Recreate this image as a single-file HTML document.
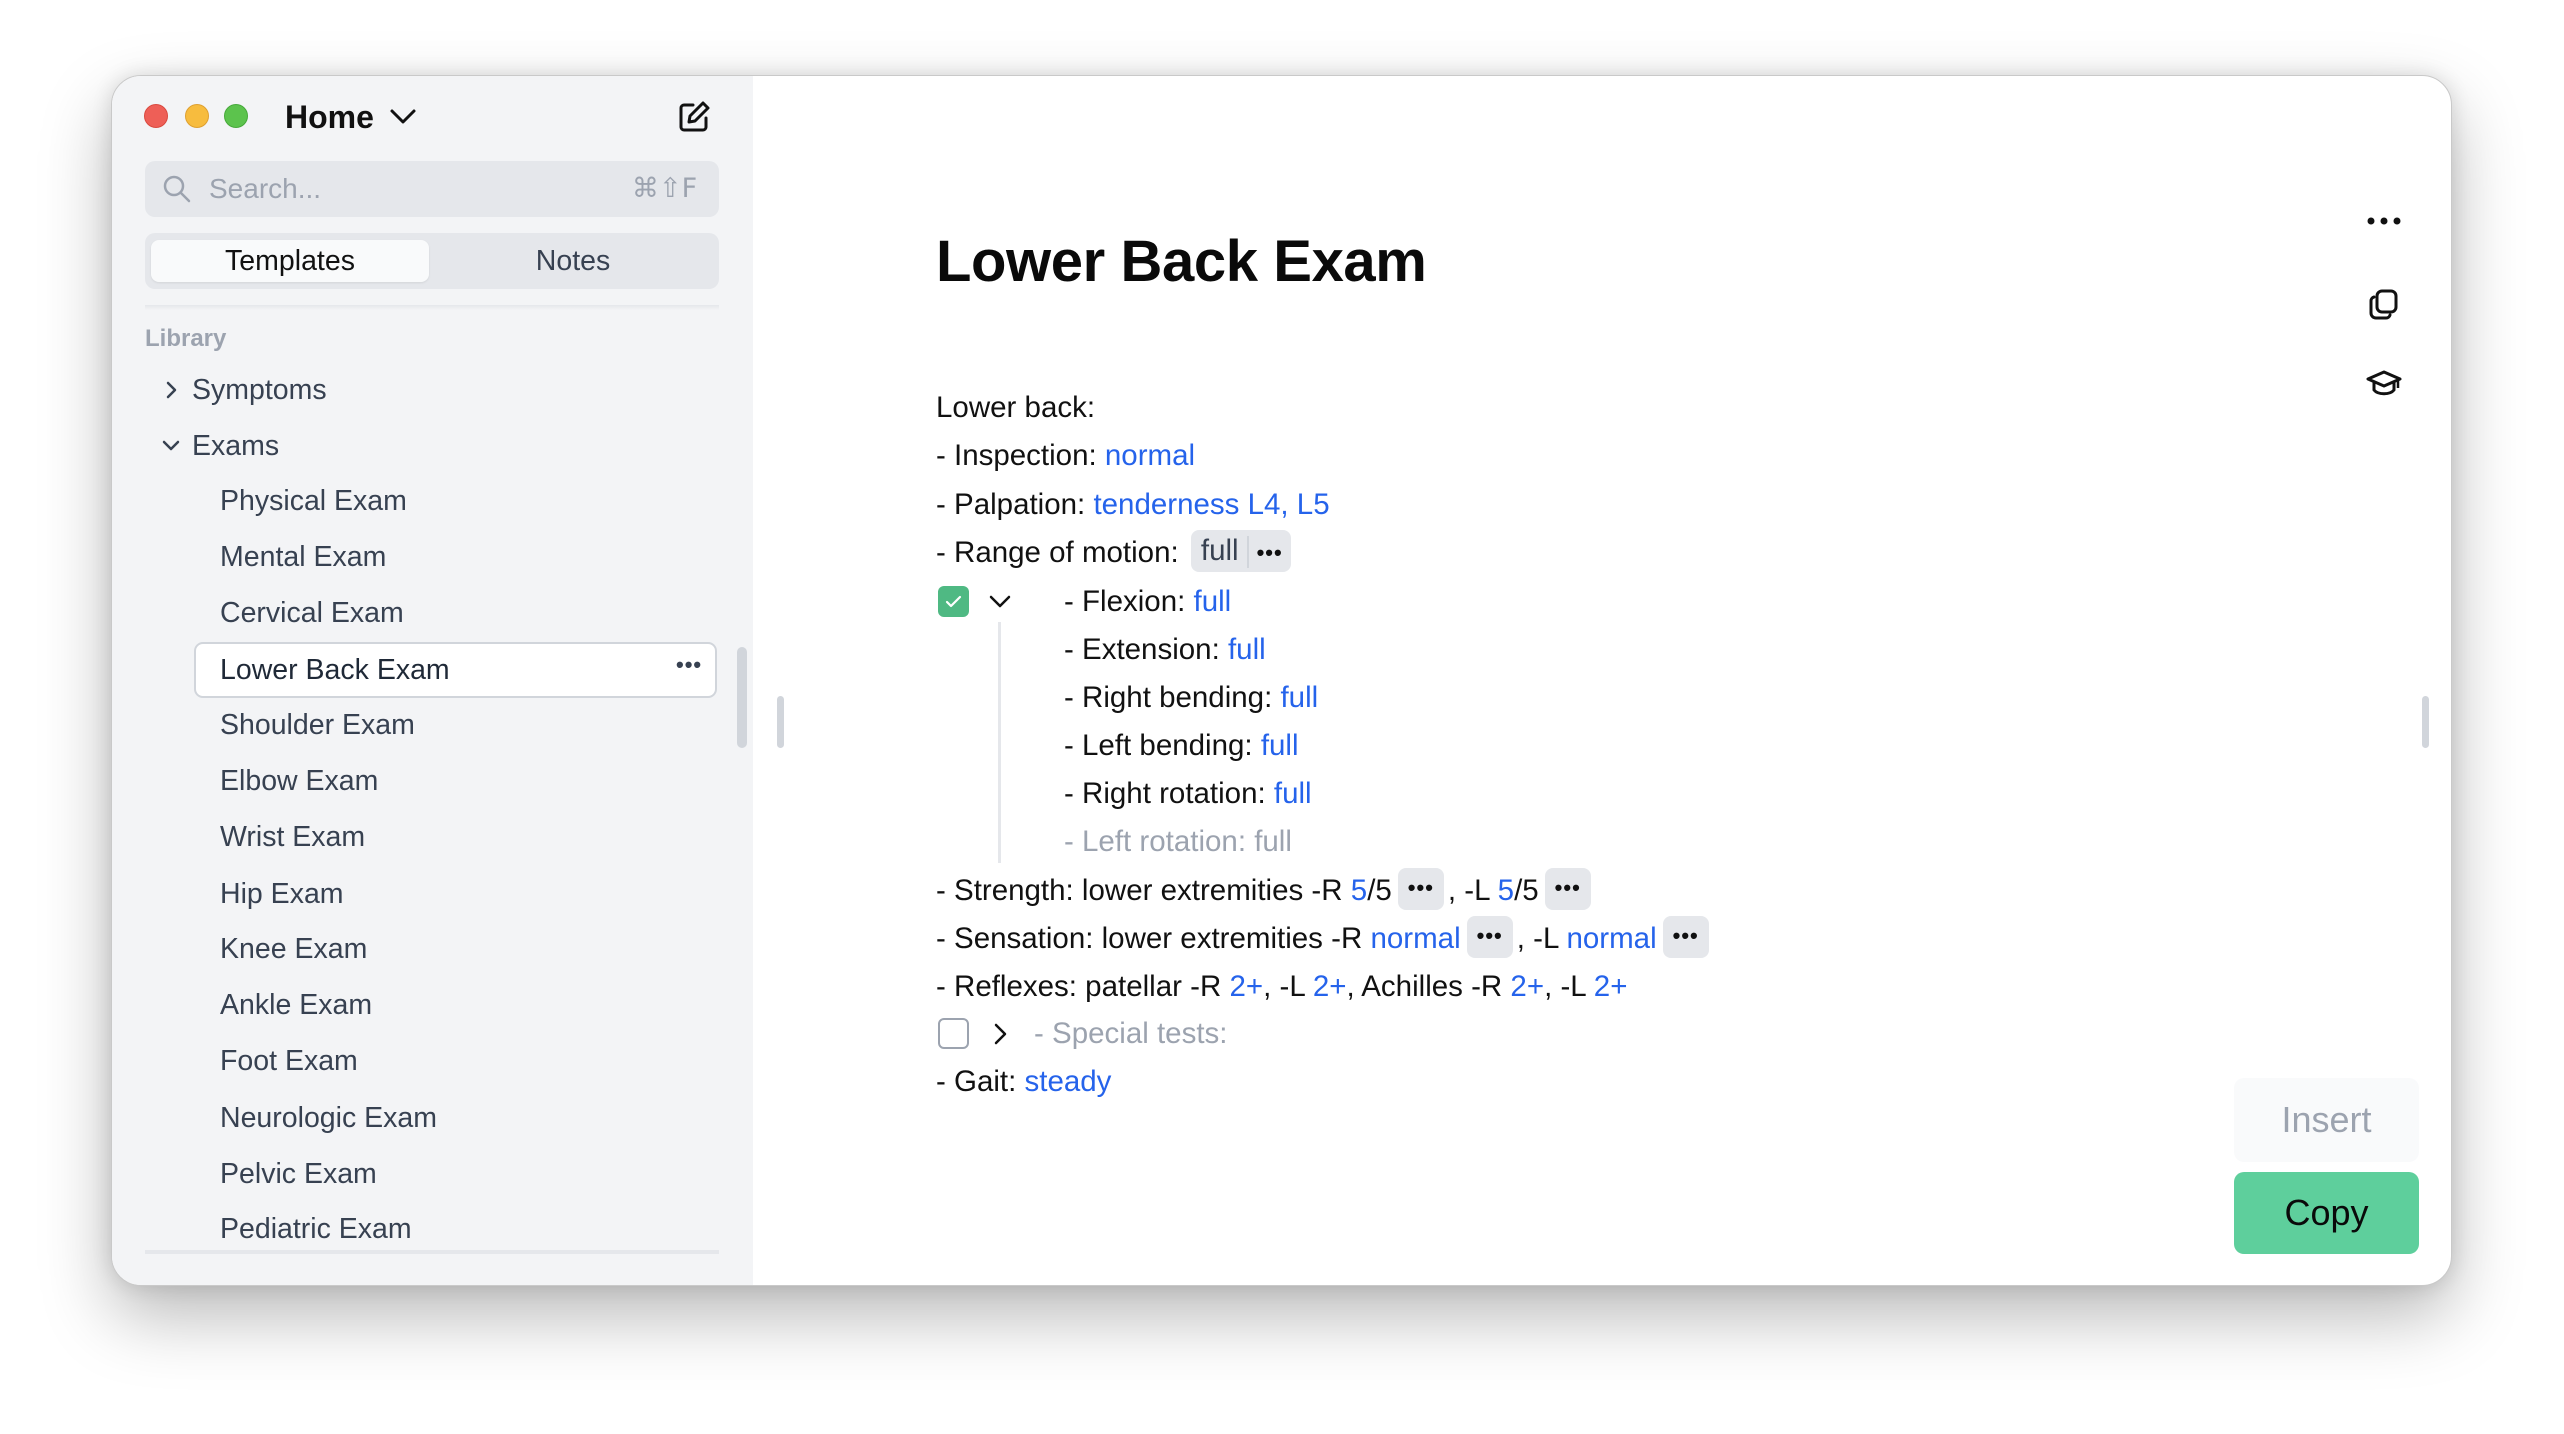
<!DOCTYPE html>
<html><head><meta charset="utf-8"><style>
*{margin:0;padding:0;box-sizing:border-box}
body{width:2564px;height:1434px;background:#fff;font-family:"Liberation Sans",sans-serif;position:relative;overflow:hidden}
.win{position:absolute;left:111px;top:75px;width:2341px;height:1211px;border-radius:30px;background:#fff;border:1px solid #c9c9c9;box-shadow:0 30px 70px rgba(0,0,0,.28),0 0 20px rgba(0,0,0,.12);overflow:hidden}
.side{position:absolute;left:0;top:0;width:641px;height:100%;background:#f3f4f6}
.a{position:absolute}
.dot{position:absolute;width:24px;height:24px;border-radius:50%;top:28px}
.si{position:absolute;left:108px;font-size:28.5px;color:#374151;line-height:40px}
.t{position:absolute;left:824px;font-size:29.5px;line-height:40px;color:#111;white-space:nowrap}
.b{color:#2563eb}
.pill{display:inline-block;background:#e5e7eb;border-radius:8px;height:42px;vertical-align:middle;line-height:40px;padding:0 10px;font-weight:bold;letter-spacing:1px;font-size:22px;color:#111;margin:-6px 4px 0 6px}
</style></head><body>
<div class="win">
 <div class="side">
  <div class="dot" style="left:32px;background:#ee5f57;border:1px solid #d9493f"></div>
  <div class="dot" style="left:73px;background:#f7bc3e;border:1px solid #dea030"></div>
  <div class="dot" style="left:112px;background:#5cc34d;border:1px solid #46a93a"></div>
  <div class="a" style="left:173px;top:20px;font-size:32px;font-weight:bold;color:#111;line-height:42px">Home</div>
  <svg class="a" style="left:277px;top:32px" width="28" height="18" viewBox="0 0 28 18"><path d="M3 3l11 11 11-11" fill="none" stroke="#111" stroke-width="3" stroke-linecap="round" stroke-linejoin="round"/></svg>
  <svg class="a" style="left:565px;top:24px" width="34" height="34" viewBox="0 0 34 34"><path d="M16 5H7a3 3 0 0 0-3 3v19a3 3 0 0 0 3 3h19a3 3 0 0 0 3-3v-9" fill="none" stroke="#111" stroke-width="3" stroke-linecap="round"/><path d="M26 3l5 5-13 13-6 1 1-6z" fill="none" stroke="#111" stroke-width="3" stroke-linejoin="round"/></svg>
  <div class="a" style="left:33px;top:85px;width:574px;height:56px;background:#e5e7eb;border-radius:10px"></div>
  <svg class="a" style="left:50px;top:98px" width="30" height="30" viewBox="0 0 30 30"><circle cx="12" cy="12" r="9" fill="none" stroke="#9ca3af" stroke-width="2.5"/><path d="M19 19l8 8" stroke="#9ca3af" stroke-width="2.5" stroke-linecap="round"/></svg>
  <div class="a" style="left:97px;top:93px;font-size:28px;color:#9ca3af;line-height:40px">Search...</div>
  <div class="a" style="left:520px;top:93px;font-size:27px;color:#9ca3af;line-height:40px;font-family:'DejaVu Sans',sans-serif">⌘⇧F</div>
  <div class="a" style="left:33px;top:157px;width:574px;height:56px;background:#e5e7eb;border-radius:10px"></div>
  <div class="a" style="left:39px;top:164px;width:278px;height:42px;background:#f9fafb;border-radius:8px;box-shadow:0 1px 2px rgba(0,0,0,.08)"></div>
  <div class="a" style="left:39px;top:165px;width:278px;text-align:center;font-size:28.5px;line-height:40px;color:#111">Templates</div>
  <div class="a" style="left:320px;top:165px;width:282px;text-align:center;font-size:28.5px;line-height:40px;color:#374151">Notes</div>
  <div class="a" style="left:33px;top:229px;width:574px;height:5px;background:linear-gradient(#e5e7eb,#f3f4f6)"></div>
  <div class="a" style="left:33px;top:248px;font-size:24px;font-weight:bold;color:#9ca3af;line-height:30px">Library</div>
  <svg class="a" style="left:52px;top:304px" width="14" height="20" viewBox="0 0 14 20"><path d="M4 3l7 7-7 7" fill="none" stroke="#374151" stroke-width="2.5" stroke-linecap="round" stroke-linejoin="round"/></svg>
  <div class="si" style="left:80px;top:294px">Symptoms</div>
  <svg class="a" style="left:49px;top:363px" width="20" height="14" viewBox="0 0 20 14"><path d="M3 3l7 7 7-7" fill="none" stroke="#374151" stroke-width="2.5" stroke-linecap="round" stroke-linejoin="round"/></svg>
  <div class="si" style="left:80px;top:350px">Exams</div>
  <div class="a" style="left:82px;top:566px;width:523px;height:56px;border:2px solid #d1d5db;border-radius:9px;background:#fff"></div>
  <div class="a" style="left:564px;top:576px;font-size:22px;font-weight:bold;letter-spacing:1px;color:#374151">•••</div>
  <div class="si" style="top:405px">Physical Exam</div>
  <div class="si" style="top:461px">Mental Exam</div>
  <div class="si" style="top:517px">Cervical Exam</div>
  <div class="si" style="top:574px;color:#1f2937">Lower Back Exam</div>
  <div class="si" style="top:629px">Shoulder Exam</div>
  <div class="si" style="top:685px">Elbow Exam</div>
  <div class="si" style="top:741px">Wrist Exam</div>
  <div class="si" style="top:798px">Hip Exam</div>
  <div class="si" style="top:853px">Knee Exam</div>
  <div class="si" style="top:909px">Ankle Exam</div>
  <div class="si" style="top:965px">Foot Exam</div>
  <div class="si" style="top:1022px">Neurologic Exam</div>
  <div class="si" style="top:1078px">Pelvic Exam</div>
  <div class="si" style="top:1133px">Pediatric Exam</div>
  <div class="a" style="left:33px;top:1174px;width:574px;height:4px;background:#e5e7eb"></div>
  <div class="a" style="left:625px;top:571px;width:10px;height:101px;background:#d1d5db;border-radius:5px"></div>
 </div>
 <div class="a" style="left:665px;top:620px;width:7px;height:52px;background:#d1d5db;border-radius:4px"></div>
 <div class="a" style="left:2310px;top:620px;width:7px;height:52px;background:#d1d5db;border-radius:4px"></div>

 <div class="a" style="left:824px;top:150px;font-size:58px;font-weight:bold;color:#0a0a0a;line-height:72px;letter-spacing:-0.4px">Lower Back Exam</div>

 <div class="t" style="top:312px">Lower back:</div>
 <div class="t" style="top:360px">- Inspection: <span class="b">normal</span></div>
 <div class="t" style="top:409px">- Palpation: <span class="b">tenderness L4, L5</span></div>
 <div class="t" style="top:457px">- Range of motion: <span style="display:inline-block;background:#e5e7eb;border-radius:8px;height:42px;vertical-align:middle;margin:-6px 0 0 4px;line-height:42px;padding:0 0 0 10px;color:#374151">full<span style="display:inline-block;width:2px;height:32px;background:#d1d5db;vertical-align:middle;margin:0 8px"></span><b style="font-size:22px;letter-spacing:1px;padding-right:8px;color:#111">•••</b></span></div>
 <div class="a" style="left:826px;top:510px;width:31px;height:31px;border-radius:6px;background:#4fb983"></div>
 <svg class="a" style="left:830px;top:514px" width="23" height="23" viewBox="0 0 23 23"><path d="M5 12l4 4 9-9" fill="none" stroke="#fff" stroke-width="2.2" stroke-linecap="round" stroke-linejoin="round"/></svg>
 <svg class="a" style="left:876px;top:518px" width="24" height="16" viewBox="0 0 24 16"><path d="M3 3l9 9 9-9" fill="none" stroke="#111" stroke-width="2.5" stroke-linecap="round" stroke-linejoin="round"/></svg>
 <div class="a" style="left:886px;top:546px;width:3px;height:241px;background:#e5e7eb"></div>
 <div class="t" style="left:952px;top:506px">- Flexion: <span class="b">full</span></div>
 <div class="t" style="left:952px;top:554px">- Extension: <span class="b">full</span></div>
 <div class="t" style="left:952px;top:602px">- Right bending: <span class="b">full</span></div>
 <div class="t" style="left:952px;top:650px">- Left bending: <span class="b">full</span></div>
 <div class="t" style="left:952px;top:698px">- Right rotation: <span class="b">full</span></div>
 <div class="t" style="left:952px;top:746px;color:#9ca3af">- Left rotation: full</div>
 <div class="t" style="top:795px">- Strength: lower extremities -R <span class="b">5</span>/5<span class="pill">•••</span>, -L <span class="b">5</span>/5<span class="pill">•••</span></div>
 <div class="t" style="top:843px">- Sensation: lower extremities -R <span class="b">normal</span><span class="pill">•••</span>, -L <span class="b">normal</span><span class="pill">•••</span></div>
 <div class="t" style="top:891px">- Reflexes: patellar -R <span class="b">2+</span>, -L <span class="b">2+</span>, Achilles -R <span class="b">2+</span>, -L <span class="b">2+</span></div>
 <div class="a" style="left:826px;top:942px;width:31px;height:31px;border-radius:6px;border:2px solid #9ca3af;background:#fff"></div>
 <svg class="a" style="left:880px;top:946px" width="16" height="24" viewBox="0 0 16 24"><path d="M4 3l9 9-9 9" fill="none" stroke="#111" stroke-width="2.5" stroke-linecap="round" stroke-linejoin="round"/></svg>
 <div class="t" style="left:922px;top:938px;color:#9ca3af">- Special tests:</div>
 <div class="t" style="top:986px">- Gait: <span class="b">steady</span></div>

 <svg class="a" style="left:2254px;top:140px" width="36" height="10" viewBox="0 0 36 10"><circle cx="5" cy="5" r="3.5" fill="#111"/><circle cx="18" cy="5" r="3.5" fill="#111"/><circle cx="31" cy="5" r="3.5" fill="#111"/></svg>
 <svg class="a" style="left:2255px;top:212px" width="34" height="34" viewBox="0 0 34 34"><rect x="10" y="3" width="19" height="21" rx="5" fill="none" stroke="#111" stroke-width="3"/><path d="M7 9a4 4 0 0 0-3 4v12a5 5 0 0 0 5 5h10a4 4 0 0 0 4-3" fill="none" stroke="#111" stroke-width="3" stroke-linecap="round"/></svg>
 <svg class="a" style="left:2253px;top:292px" width="38" height="32" viewBox="0 0 38 32"><path d="M19 4L3 11l16 7 16-7z" fill="none" stroke="#111" stroke-width="3" stroke-linejoin="round"/><path d="M9 14v8c4 5 16 5 20 0v-8" fill="none" stroke="#111" stroke-width="3" stroke-linejoin="round"/><path d="M33 12v8" stroke="#111" stroke-width="2.5"/></svg>

 <div class="a" style="left:2122px;top:1002px;width:185px;height:84px;background:#f9fafb;border-radius:10px;text-align:center;line-height:84px;font-size:36px;color:#9ca3af">Insert</div>
 <div class="a" style="left:2122px;top:1096px;width:185px;height:82px;background:#5ecf9c;border-radius:10px;text-align:center;line-height:82px;font-size:36px;color:#0a0a0a">Copy</div>
</div>
</body></html>
